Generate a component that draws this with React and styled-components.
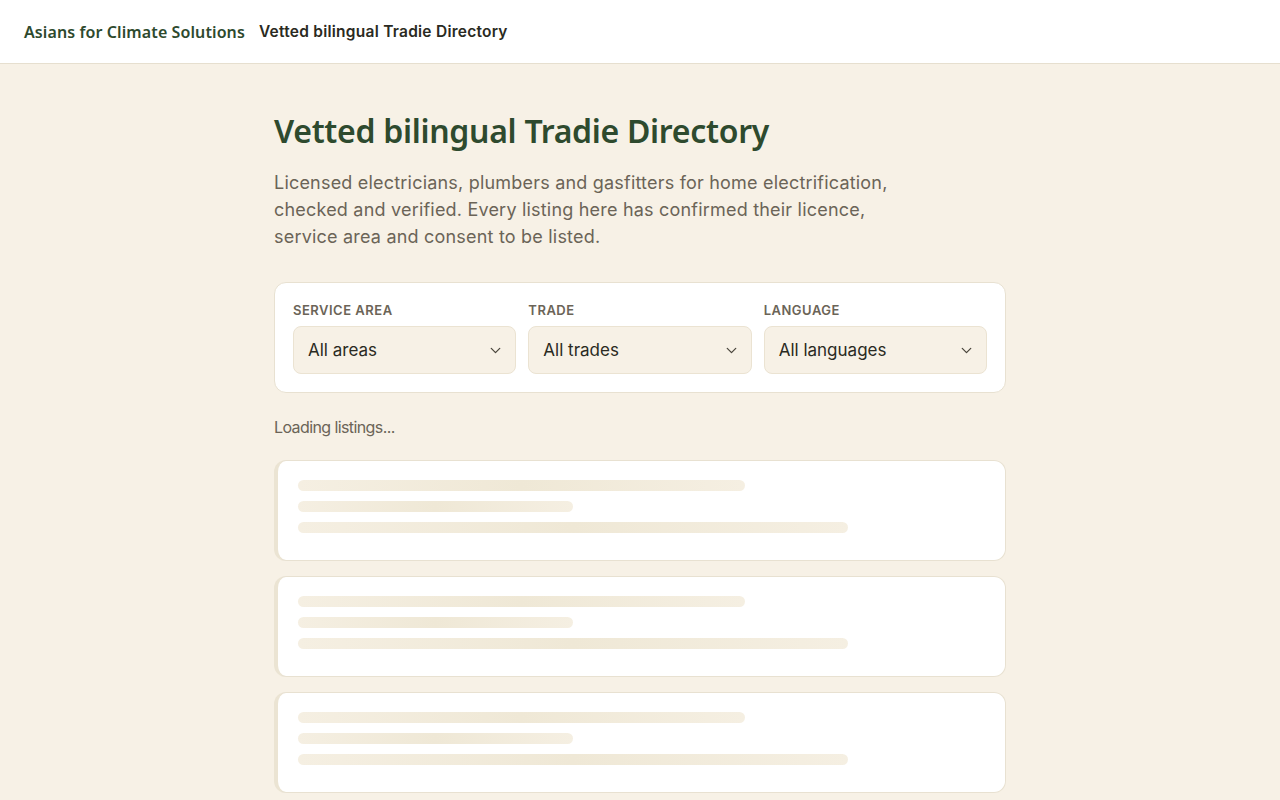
import React from 'react';
import styled, { createGlobalStyle, keyframes } from 'styled-components';

const GlobalStyle = createGlobalStyle`
  * { box-sizing: border-box; }
  body {
    margin: 0;
    background: #f7f1e6;
    font-family: Inter, "Noto Sans", sans-serif;
    color: #2a2a22;
  }
`;

const shimmer = keyframes`
  0% { background-position: 100% 0; }
  100% { background-position: 0 0; }
`;

const Header = styled.header`
  height: 64px;
  background: #ffffff;
  border-bottom: 1px solid #e6dfcf;
  display: flex;
  align-items: center;
  gap: 14px;
  padding: 0 24px;
`;

const Brand = styled.span`
  font-family: "Noto Sans", sans-serif;
  font-weight: 600;
  font-size: 16px;
  color: #2e4a2e;
  letter-spacing: 0.1px;
`;

const PageName = styled.span`
  font-family: Inter, sans-serif;
  font-weight: 600;
  font-size: 15.5px;
  letter-spacing: 0.25px;
  color: #2a2a22;
`;

const Main = styled.main`
  width: 732px;
  margin: 0 auto;
  padding-top: 48px;
`;

const Title = styled.h1`
  margin: 0 0 19px;
  font-family: "Noto Sans", sans-serif;
  font-weight: 600;
  font-size: 32px;
  line-height: 1.2;
  color: #2e4a2e;
  letter-spacing: -0.3px;
`;

const Intro = styled.p`
  margin: 0 0 32px;
  max-width: 630px;
  font-size: 18px;
  line-height: 27px;
  letter-spacing: 0.2px;
  color: #6b6457;
`;

const FilterCard = styled.section`
  background: #ffffff;
  border: 1px solid #e8e1d1;
  border-radius: 12px;
  padding: 18px;
  display: grid;
  grid-template-columns: repeat(3, 1fr);
  gap: 12px;
`;

const Field = styled.label`
  display: flex;
  flex-direction: column;
  gap: 7px;
`;

const FieldLabel = styled.span`
  font-size: 13px;
  font-weight: 600;
  letter-spacing: 0.5px;
  text-transform: uppercase;
  color: #6b6457;
  line-height: 18px;
`;

const Select = styled.div`
  height: 48px;
  background: #f7f1e6;
  border: 1px solid #ebe3d2;
  border-radius: 8px;
  padding: 0 11px 0 14px;
  display: flex;
  align-items: center;
  justify-content: space-between;
  font-size: 17px;
  color: #2a2a22;
`;

const Status = styled.p`
  margin: 24px 0 23px;
  font-size: 16px;
  color: #6b6457;
  letter-spacing: -0.6px;
`;

const List = styled.div`
  display: flex;
  flex-direction: column;
  gap: 15px;
`;

const SkeletonCard = styled.div`
  height: 101px;
  background: #ffffff;
  border: 1px solid #e8e1d1;
  border-left: 4px solid #ebe4d3;
  border-radius: 12px;
  padding: 19px 20px;
  display: flex;
  flex-direction: column;
  gap: 10px;
`;

const Bar = styled.div`
  width: ${p => p.$w}%;
  height: 11px;
  border-radius: 6px;
  background: linear-gradient(90deg, #f5efe2 0%, #efe8d6 25%, #f5efe2 50%, #f7f2e8 100%);
  background-size: 200% 100%;
  animation: ${shimmer} 1.6s linear infinite;
`;

const Chevron = () => (
  <svg width="17" height="17" viewBox="0 0 24 24" fill="none" stroke="#4a463d" strokeWidth="1.8" strokeLinecap="round" strokeLinejoin="round">
    <path d="m6 9 6 6 6-6" />
  </svg>
);

const filters = [
  { label: 'Service area', value: 'All areas' },
  { label: 'Trade', value: 'All trades' },
  { label: 'Language', value: 'All languages' },
];

export default function App() {
  return (
    <>
      <GlobalStyle />
      <Header>
        <Brand>Asians for Climate Solutions</Brand>
        <PageName>Vetted bilingual Tradie Directory</PageName>
      </Header>
      <Main>
        <Title>Vetted bilingual Tradie Directory</Title>
        <Intro>
          Licensed electricians, plumbers and gasfitters for home electrification,
          checked and verified. Every listing here has confirmed their licence,
          service area and consent to be listed.
        </Intro>
        <FilterCard>
          {filters.map(f => (
            <Field key={f.label}>
              <FieldLabel>{f.label}</FieldLabel>
              <Select>
                {f.value}
                <Chevron />
              </Select>
            </Field>
          ))}
        </FilterCard>
        <Status>Loading listings...</Status>
        <List>
          {[0, 1, 2].map(i => (
            <SkeletonCard key={i}>
              <Bar $w={65} />
              <Bar $w={40} />
              <Bar $w={80} />
            </SkeletonCard>
          ))}
        </List>
      </Main>
    </>
  );
}
